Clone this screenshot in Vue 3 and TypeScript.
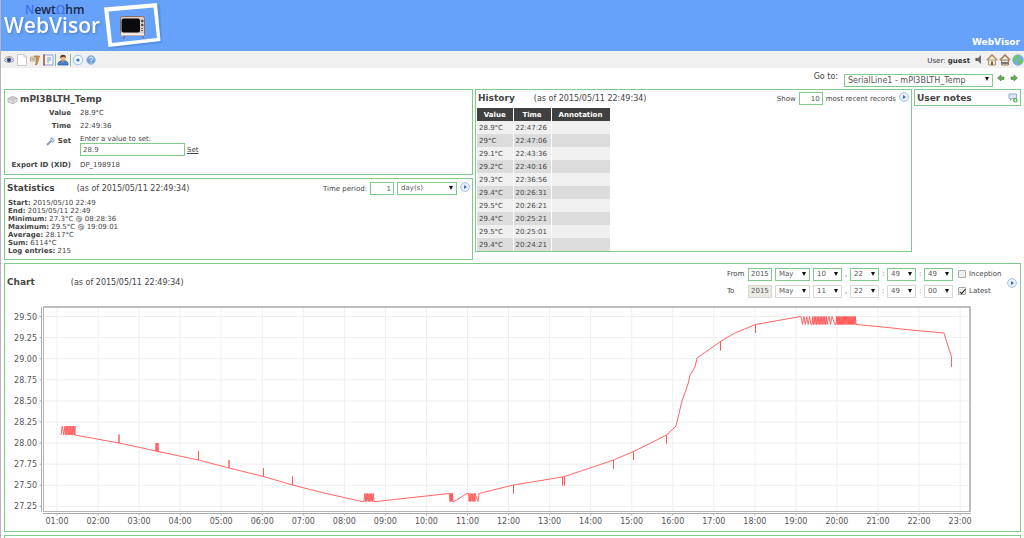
<script setup lang="ts">
import { ref } from 'vue'

const asOf = '(as of 2015/05/11 22:49:34)'
const setValue = ref('28.9')
const periodCount = ref('1')
const period = ref('day(s)')
const recordLimit = ref('10')
const point = ref('SerialLine1 - mPI3BLTH_Temp')
const inception = ref(false)
const latest = ref(true)

const statistics: [string, string][] = [
  ['Start', '2015/05/10 22:49'],
  ['End', '2015/05/11 22:49'],
  ['Minimum', '27.3°C @ 08:28:36'],
  ['Maximum', '29.5°C @ 19:09:01'],
  ['Average', '28.17°C'],
  ['Sum', '6114°C'],
  ['Log entries', '215'],
]

const history: [string, string][] = [
  ['28.9°C', '22:47:26'],
  ['29°C', '22:47:06'],
  ['29.1°C', '22:43:36'],
  ['29.2°C', '22:40:16'],
  ['29.3°C', '22:36:56'],
  ['29.4°C', '20:26:31'],
  ['29.5°C', '20:26:21'],
  ['29.4°C', '20:25:21'],
  ['29.5°C', '20:25:01'],
  ['29.4°C', '20:24:21'],
]

interface RangeRow {
  id: string
  label: string
  year: string
  parts: { name: string; value: string; sep: string }[]
  off: boolean
}

const ranges = ref<RangeRow[]>([
  {
    id: 'from', label: 'From', year: '2015', off: false,
    parts: [
      { name: 'month', value: 'May', sep: '' },
      { name: 'day', value: '10', sep: ',' },
      { name: 'hour', value: '22', sep: ':' },
      { name: 'minute', value: '49', sep: ':' },
      { name: 'second', value: '49', sep: '' },
    ],
  },
  {
    id: 'to', label: 'To', year: '2015', off: true,
    parts: [
      { name: 'month', value: 'May', sep: '' },
      { name: 'day', value: '11', sep: ',' },
      { name: 'hour', value: '22', sep: ':' },
      { name: 'minute', value: '49', sep: ':' },
      { name: 'second', value: '00', sep: '' },
    ],
  },
])

type Pt = [number, number]

const xTicks = Array.from({ length: 23 }, (_, i) => ({
  x: 57 + i * 41.05,
  label: String(i + 1).padStart(2, '0') + ':00',
}))
const yTicks = Array.from({ length: 10 }, (_, i) => ({
  y: 316.5 + i * 21.1,
  label: (29.5 - i * 0.25).toFixed(2),
}))

function burst(x0: number, x1: number, steps: number, a: number, b: number): Pt[] {
  return Array.from({ length: steps + 1 }, (_, i): Pt => [x0 + ((x1 - x0) * i) / steps, i % 2 ? b : a])
}
function spike(x: number, base: number, tip: number): Pt[] {
  return [[x, base], [x, tip], [x, base]]
}

const series: Pt[] = [
  ...burst(61, 65, 3, 435, 426),
  ...burst(65.5, 75, 13, 435, 426),
  [75, 435],
  ...spike(119, 443, 434.5),
  ...spike(156, 451, 443), ...spike(157, 451.5, 443), ...spike(158, 451.5, 443),
  ...spike(198.5, 460, 451),
  ...spike(229, 468, 460),
  ...spike(263.5, 476.5, 468),
  ...spike(292.5, 485, 476.5),
  [324, 493], [362, 501.5],
  ...burst(364, 374, 14, 501.5, 493.5),
  [376, 501.5], [449, 493.5],
  ...burst(449.5, 453, 7, 493.5, 501.5),
  [454, 501.5], [467, 493.5],
  ...burst(468.5, 475, 9, 493.5, 501.5),
  [475, 493.5], [478, 501.5], [479, 493.5],
  ...spike(513.5, 485, 493.5),
  ...spike(562.5, 477, 485.5), ...spike(564.5, 476.5, 485.5),
  [590, 468],
  ...spike(613.5, 460, 468.5),
  ...spike(633.5, 451.5, 460),
  [650, 443.5],
  ...spike(666.5, 435, 443.5),
  [676, 426], [682, 401], [688, 384], [690, 375], [695, 367], [697, 358],
  ...spike(720.5, 341.5, 350.5),
  [735, 333],
  ...spike(755.5, 324.5, 333),
  [778, 320.5], [801, 316.5],
  ...burst(802.5, 811, 6, 324.5, 316.5),
  ...burst(812, 827, 20, 324.5, 316.5),
  ...burst(829, 832, 2, 316.5, 324.5),
  [835, 324.5],
  ...burst(836, 856, 36, 324.5, 316.5),
  [856, 324.5], [878, 326.5], [911, 330], [944, 333], [948, 346], [951.5, 357], [951.5, 367],
]
const seriesPoints = series.map((p) => p.join(',')).join(' ')
</script>

<template>
  <div class="page">
    <header class="banner">
      <a href="#" class="logo" aria-label="NewtOhm WebVisor">
        <svg width="168" height="51" viewBox="0 0 168 51">
          <text x="24" y="14" class="brand"><tspan class="brand-hi">N</tspan>ewt<tspan class="brand-hi">Ω</tspan>hm</text>
          <text x="3" y="33" class="product">WebVisor</text>
          <path d="M107 10l52-5 2 38-53 6z" fill="#4a80cc" opacity=".5" />
          <path d="M103 7.500l53-4.500 3.500 38-52 6z" fill="#fff" />
          <path d="M107.500 11.500l45-4 3.500 30.500-45 5z" fill="#66a2f9" />
          <path d="M124 36l-1.500 3M141 35.500l2 3" stroke="#a04a3c" stroke-width="1" />
          <rect x="119.500" y="16.500" width="24" height="19" rx="2" fill="#d9d0cb" stroke="#8d6d68" />
          <path d="M120 34.500h23" stroke="#f5f1ef" stroke-width="2" />
          <rect x="120.500" y="18.500" width="18.500" height="14" rx="2" fill="#0b0b0d" />
          <circle cx="141.300" cy="21" r="1.200" fill="#333" />
          <circle cx="141.300" cy="25" r="1.200" fill="#444" />
          <path d="M140 28.500h2M140 30.500h2" stroke="#75665f" />
        </svg>
      </a>
      <span class="instance">WebVisor</span>
    </header>

    <nav class="toolbar" aria-label="Main">
      <a href="#" class="tool" aria-label="Watch list">
        <svg width="12" height="12" viewBox="0 0 12 12"><path d="M1 6.500Q6 1.500 11 6.500Q6 10.500 1 6.500z" fill="#e9edf5" stroke="#9c9aa8" /><circle cx="6" cy="6" r="2.300" fill="#495e9d" /><circle cx="6" cy="6" r="1" fill="#1f2848" /><path d="M1.500 4.500Q6 .5 10.500 4.500" fill="none" stroke="#b8a49c" /></svg>
      </a>
      <a href="#" class="tool" aria-label="Graphic views">
        <svg width="12" height="12" viewBox="0 0 12 12"><path d="M1.500.5h6.500l2.500 2.500v8.500h-9z" fill="#fff" stroke="#c9c9c9" /><path d="M8 .5V3h2.500" fill="none" stroke="#c9c9c9" /></svg>
      </a>
      <a href="#" class="tool" aria-label="Events">
        <svg width="12" height="12" viewBox="0 0 12 12"><path d="M1.500 3h6v4h-6z" fill="#f0e6d4" stroke="#b39a70" stroke-width=".8" /><path d="M2.500 5h4" stroke="#7d6b50" stroke-width=".8" /><path d="M5 2h5.500L8 10.500l-1.500.5L8 4z" fill="#d99a52" stroke="#a8743c" stroke-width=".7" /></svg>
      </a>
      <a href="#" class="tool" aria-label="Reports">
        <svg width="12" height="12" viewBox="0 0 12 12"><rect x="2" y="1" width="9" height="10" fill="#f5f8fd" stroke="#8fa4cc" /><path d="M2 .5v11" stroke="#b5533b" stroke-width="1.500" /><path d="M5 4h4M5 6h4M5 8h2" stroke="#7b97cf" /></svg>
      </a>
      <i class="divider"></i>
      <a href="#" class="tool" aria-label="Users">
        <svg width="12" height="12" viewBox="0 0 12 12"><path d="M1 11V9q1-2.500 5-2.500T11 9v2z" fill="#4c82d4" stroke="#2e5590" stroke-width=".7" /><circle cx="6" cy="4" r="2.600" fill="#edb184" /><path d="M3.200 4Q3 .8 6 .8T8.800 4Q7.500 2.500 6 2.800T3.200 4z" fill="#5a3520" /><path d="M4.500 7h3L6 9z" fill="#dc7c36" /></svg>
      </a>
      <i class="divider"></i>
      <a href="#" class="tool" aria-label="Status">
        <svg width="12" height="12" viewBox="0 0 12 12"><circle cx="6" cy="6" r="4.800" fill="#eef5fe" stroke="#9dbdea" /><circle cx="6" cy="6" r="1.600" fill="#3a73c4" /></svg>
      </a>
      <a href="#" class="tool" aria-label="Help">
        <svg width="12" height="12" viewBox="0 0 12 12"><circle cx="6" cy="6" r="4.400" fill="#6f9fdb" stroke="#a6c3e8" /><path d="M4.300 4.600q.2-1.400 1.800-1.400t1.700 1.300Q7.800 5.700 6 6.500v.8M6 8.300v1" fill="none" stroke="#fff" /></svg>
      </a>
      <span class="who">User: <b>guest</b></span>
      <a href="#" class="tool" aria-label="Mute">
        <svg width="12" height="12" viewBox="0 0 12 12"><path d="M3 4h2l3-3v9L5 7H3z" fill="#6f6f6f" /><path d="M3 4v3" stroke="#444" /></svg>
      </a>
      <a href="#" class="tool" aria-label="Go home">
        <svg width="12" height="12" viewBox="0 0 12 12"><path d="M2.500 6h7v5h-7z" fill="#f2ead8" stroke="#96805c" stroke-width=".8" /><path d="M.8 6.300L6 1l5.200 5.300" fill="none" stroke="#c08a58" stroke-width="1.600" /><rect x="5" y="7.500" width="2" height="3.500" fill="#8a5f3a" /></svg>
      </a>
      <a href="#" class="tool" aria-label="Set home">
        <svg width="12" height="12" viewBox="0 0 12 12"><path d="M2.500 6h7v5h-7z" fill="#eadfc8" stroke="#75664e" stroke-width=".8" /><path d="M.8 6.300L6 1l5.200 5.300" fill="none" stroke="#b07c50" stroke-width="1.600" /><path d="M3 9h6" stroke="#5d5d5d" stroke-width="1.600" /></svg>
      </a>
      <a href="#" class="tool" aria-label="Language">
        <svg width="12" height="12" viewBox="0 0 12 12"><circle cx="6" cy="6" r="5.300" fill="#72ade4" stroke="#7fa8c8" stroke-width=".7" /><path d="M1.500 4q1.500-3.500 5-3 1.500 2-.5 3T4 7.500Q2 7.500 1 6zM6 6.500q3-2.500 5 0 0 2-2 3.500Q6 11 6 9z" fill="#6cc760" /></svg>
      </a>
    </nav>

    <div class="goto">
      <label for="goto">Go to:</label>
      <span class="pick pick-point">
        <select id="goto" v-model="point"><option>SerialLine1 - mPI3BLTH_Temp</option></select>
      </span>
      <button type="button" class="icon" aria-label="Previous point">
        <svg width="10" height="10" viewBox="0 0 10 10"><path d="M1.500 5L5 2v2h3v2.500H5V8z" fill="#62ae50" stroke="#3c8434" stroke-width=".6" /></svg>
      </button>
      <button type="button" class="icon" aria-label="Next point">
        <svg width="10" height="10" viewBox="0 0 10 10"><path d="M8.500 5L5 2v2H2v2.500h3V8z" fill="#62ae50" stroke="#3c8434" stroke-width=".6" /></svg>
      </button>
    </div>

    <main>
      <div class="columns">
        <div class="stack">
          <section class="panel device">
            <h1>
              <svg width="11" height="10" viewBox="0 0 12 10"><path d="M1 3.500L6 1l5 2v3.500L6.500 9 1 7z" fill="#e3e3e3" stroke="#a2a2a2" stroke-width=".8" /><path d="M1 3.500l5.500 2 4.500-2.500M6.500 5.500V9M3 3l4 1.500M5 2l4 1.500" fill="none" stroke="#aaa" stroke-width=".7" /></svg>
              mPI3BLTH_Temp
            </h1>
            <div class="facts">
              <b>Value</b><span>28.9°C</span>
              <b>Time</b><span>22:49:36</span>
              <b class="set-label">
                <svg width="9" height="9" viewBox="0 0 9 9"><path d="M1.500 7.500L5 4" stroke="#7f9bc8" stroke-width="1.800" stroke-linecap="round" /><path d="M7.500 1.300L6 2.800M4.500 2.500q.5-1.700 2-1.700M8.300 2.500q.2 2-2 2.500L4.500 4" fill="none" stroke="#8ba4cc" stroke-width="1.200" /></svg>
                Set
              </b>
              <div class="setter">
                <label for="set-value">Enter a value to set:</label>
                <div class="set-row">
                  <input id="set-value" v-model="setValue" type="text" />
                  <a href="#">Set</a>
                </div>
              </div>
              <b>Export ID (XID)</b><span>DP_198918</span>
            </div>
          </section>

          <section class="panel stats">
            <div class="bar">
              <h2>Statistics</h2>
              <span class="as-of">{{ asOf }}</span>
              <div class="tools">
                <label for="period-count">Time period:</label>
                <input id="period-count" v-model="periodCount" type="text" class="num" />
                <span class="pick pick-period">
                  <select v-model="period" aria-label="Period unit"><option>day(s)</option></select>
                </span>
                <button type="button" class="icon" aria-label="Refresh statistics">
                  <svg width="10" height="10" viewBox="0 0 10 10"><circle cx="5" cy="5" r="4.400" fill="#e8f1fd" stroke="#a5c1ea" /><path d="M4 3l3 2-3 2z" fill="#3570bd" /></svg>
                </button>
              </div>
            </div>
            <ul>
              <li v-for="[name, value] in statistics" :key="name"><b>{{ name }}:</b> {{ value }}</li>
            </ul>
          </section>
        </div>

        <section class="panel history">
          <div class="bar">
            <h2>History</h2>
            <span class="as-of">{{ asOf }}</span>
            <div class="tools">
              <label for="limit">Show</label>
              <input id="limit" v-model="recordLimit" type="text" class="num" />
              <span>most recent records</span>
              <button type="button" class="icon" aria-label="Refresh history">
                <svg width="10" height="10" viewBox="0 0 10 10"><circle cx="5" cy="5" r="4.400" fill="#e8f1fd" stroke="#a5c1ea" /><path d="M4 3l3 2-3 2z" fill="#3570bd" /></svg>
              </button>
            </div>
          </div>
          <table>
            <thead>
              <tr><th class="c-value">Value</th><th class="c-time">Time</th><th class="c-note">Annotation</th></tr>
            </thead>
            <tbody>
              <tr v-for="[value, time] in history" :key="time"><td>{{ value }}</td><td>{{ time }}</td><td></td></tr>
            </tbody>
          </table>
        </section>

        <section class="panel notes">
          <h2>User notes</h2>
          <button type="button" class="icon" aria-label="Add note">
            <svg width="10" height="10" viewBox="0 0 10 10"><path d="M1 1h7.500v4.500H4L2.500 7.500v-2H1z" fill="#dbe7f8" stroke="#86a3d0" stroke-width=".9" /><circle cx="7.300" cy="7.300" r="2.300" fill="#4fae49" /><path d="M7.300 6v2.600M6 7.300h2.600" stroke="#fff" stroke-width=".8" /></svg>
          </button>
        </section>
      </div>

      <section class="panel chart">
        <div class="bar chart-bar">
          <h2>Chart</h2>
          <span class="as-of">{{ asOf }}</span>
          <div class="tools">
            <div class="ranges">
              <div v-for="row in ranges" :key="row.id" class="range" :class="{ off: row.off }">
                <label :for="row.id + '-year'" class="range-label">{{ row.label }}</label>
                <input :id="row.id + '-year'" v-model="row.year" type="text" class="year" :disabled="row.off" />
                <template v-for="part in row.parts" :key="part.name">
                  <span class="pick" :class="part.name === 'month' ? 'pick-month' : 'pick-part'">
                    <select v-model="part.value" :aria-label="row.label + ' ' + part.name" :disabled="row.off">
                      <option>{{ part.value }}</option>
                    </select>
                  </span>
                  <span v-if="part.sep" class="sep">{{ part.sep }}</span>
                </template>
              </div>
            </div>
            <div class="checks">
              <label><input v-model="inception" type="checkbox" />Inception</label>
              <label><input v-model="latest" type="checkbox" />Latest</label>
            </div>
            <button type="button" class="icon" aria-label="Refresh chart">
              <svg width="10" height="10" viewBox="0 0 10 10"><circle cx="5" cy="5" r="4.400" fill="#e8f1fd" stroke="#a5c1ea" /><path d="M4 3l3 2-3 2z" fill="#3570bd" /></svg>
            </button>
          </div>
        </div>
        <svg class="plot" viewBox="5 301 1015 230" role="img" aria-label="mPI3BLTH_Temp over time">
          <g stroke="#efefef">
            <line v-for="t in xTicks" :key="t.label" :x1="t.x" :x2="t.x" y1="308" y2="511" />
            <line v-for="t in yTicks" :key="t.label" :y1="t.y" :y2="t.y" x1="44" x2="969" />
          </g>
          <rect x="43.500" y="307" width="926.500" height="204.500" fill="none" stroke="#b4b4b4" />
          <path d="M43 307h927.500M970 307v205" stroke="#b4b4b4" stroke-width="1.500" fill="none" />
          <path d="M41.500 307v205M43 513.500h927.500" stroke="#aaa" fill="none" />
          <g stroke="#aaa">
            <line v-for="t in yTicks" :key="t.label" :y1="t.y" :y2="t.y" x1="39.500" x2="41.500" />
            <line v-for="t in xTicks" :key="t.label" :x1="t.x" :x2="t.x" y1="513.500" y2="515.500" />
          </g>
          <polyline :points="seriesPoints" fill="none" stroke="#ff5555" stroke-width=".9" />
          <text v-for="t in yTicks" :key="t.label" x="37" :y="t.y + 3" text-anchor="end">{{ t.label }}</text>
          <text v-for="t in xTicks" :key="t.label" :x="t.x" y="524" text-anchor="middle">{{ t.label }}</text>
        </svg>
      </section>
      <section class="panel next"></section>
    </main>
  </div>
</template>

<style>
html,
body {
  margin: 0;
  background: #fff;
}
body {
  overflow: hidden;
}
</style>

<style scoped>
.page {
  border-left: 1px solid #b5b5c0;
  font-family: 'DejaVu Sans', Verdana, sans-serif;
  font-size: 7px;
  line-height: 8px;
  color: #444;
  height: 100vh;
  overflow: hidden;
}
*,
*::before,
*::after {
  box-sizing: border-box;
}
.banner {
  display: flex;
  justify-content: space-between;
  align-items: flex-end;
  height: 51px;
  background: #66a2f9;
}
.logo {
  display: block;
  height: 51px;
}
.brand {
  font: 600 12px 'Open Sans', sans-serif;
  fill: #1c2648;
}
.brand-hi {
  fill: #3f6df0;
}
.product {
  font: 600 21px 'Open Sans', sans-serif;
  fill: #fff;
  filter: drop-shadow(1px 1px 1px #4a7fcc);
}
.instance {
  padding: 0 4px 3px 0;
  font-size: 9px;
  line-height: 11px;
  font-weight: 700;
  color: #fff;
}
.toolbar {
  display: flex;
  align-items: center;
  gap: 1px;
  height: 17px;
  padding: 0 0 0 2px;
  background: #f0f0f0;
}
.tool {
  display: block;
  width: 12px;
  height: 12px;
}
.tool svg,
.icon svg,
h1 svg,
.plot {
  display: block;
}
.divider {
  width: 1px;
  height: 12px;
  background: #7cc488;
}
.who {
  margin-left: auto;
  margin-right: 2px;
  padding-top: 2px;
  color: #333;
}
.goto {
  display: flex;
  justify-content: flex-end;
  align-items: flex-start;
  gap: 3px;
  height: 21px;
  padding: 5px 5px 0 0;
  font-size: 8px;
}
.goto label {
  margin-right: 3px;
}
main {
  display: flex;
  flex-direction: column;
  gap: 3px;
  padding: 0 3px 0 3px;
}
.columns {
  display: grid;
  grid-template-columns: 469fr 437fr 107fr;
  gap: 2px;
  align-items: start;
}
.stack {
  display: flex;
  flex-direction: column;
  gap: 3px;
}
.panel {
  border: 1px solid #7fcb8b;
  background: #fff;
}
h1,
h2 {
  margin: 0;
  font-size: 9px;
  line-height: 11px;
  font-weight: 700;
  color: #444;
}
h1 {
  display: flex;
  align-items: center;
  gap: 2px;
}
.device {
  padding: 4px 2px 5px;
}
.facts {
  display: grid;
  grid-template-columns: 64px 1fr;
  column-gap: 9px;
  row-gap: 5px;
  padding-top: 4px;
}
.facts > b {
  text-align: right;
  white-space: nowrap;
}
.facts .set-label {
  display: flex;
  justify-content: flex-end;
  align-items: flex-start;
  gap: 3px;
  padding-top: 2px;
}
.set-row {
  display: flex;
  align-items: center;
  gap: 2px;
}
.setter label {
  display: block;
}
a {
  color: #444;
}
input[type='text'],
select {
  height: 13px;
  margin: 0;
  padding: 0 2px;
  border: 1px solid #7fcb8b;
  border-radius: 0;
  background: #fff;
  font: inherit;
  line-height: 11px;
  color: #555;
}
#set-value {
  width: 105px;
}
input.num {
  width: 24px;
  text-align: right;
}
.pick {
  position: relative;
  display: inline-block;
}
.pick select {
  display: block;
  width: 100%;
  padding: 0 0 0 3px;
  appearance: none;
}
.pick::after {
  content: '';
  position: absolute;
  top: 4px;
  right: 4px;
  border: 2px solid transparent;
  border-top: 4px solid #111;
  border-bottom: 0;
  pointer-events: none;
}
.pick-point {
  width: 149px;
  padding-top: 1px;
}
.pick-period {
  width: 60px;
}
.pick-month {
  width: 35px;
}
.pick-part {
  width: 29px;
}
.icon {
  padding: 0;
  border: 0;
  background: none;
}
.bar {
  display: flex;
  align-items: center;
}
.as-of {
  margin-left: 22px;
  font-size: 8px;
}
.history .as-of {
  margin-left: 19px;
}
.chart .as-of {
  margin-left: 36px;
}
.tools {
  display: flex;
  align-items: center;
  gap: 3px;
  margin-left: auto;
}
.stats .icon,
.history .icon {
  align-self: flex-start;
}
.stats {
  padding: 3px 2px 4px;
}
.stats ul {
  margin: 0;
  padding: 4px 0 0 1px;
  list-style: none;
}
.history {
  padding: 2px 2px 0 1px;
}
.history h2 {
  padding-left: 1px;
}
table {
  margin-top: 3px;
  border-collapse: collapse;
}
th,
td {
  height: 13px;
  padding: 0 2px;
  border-right: 1px solid #fff;
  text-align: left;
}
th {
  background: #404040;
  color: #fff;
  text-align: center;
}
td {
  background: #f0f0f0;
}
tr:nth-child(even) td {
  background: #dcdcdc;
}
.c-value {
  width: 36px;
}
.c-time {
  width: 38px;
}
.c-note {
  width: 59px;
}
.notes {
  display: flex;
  justify-content: space-between;
  align-items: center;
  height: 17px;
  padding: 1px 2px 0;
}
.chart-bar {
  height: 37px;
  padding: 0 3px 0 2px;
}
.ranges,
.checks {
  display: flex;
  flex-direction: column;
  gap: 4px;
}
.range {
  display: flex;
  align-items: center;
  gap: 3px;
}
.range-label {
  width: 18px;
}
.year {
  width: 24px;
}
.sep {
  width: 2px;
}
.off .year,
.off select {
  border-color: #d8d8d8;
  opacity: 1;
}
.off input.year {
  background: #ebebe4;
}
.checks {
  padding: 0 3px 0 2px;
}
.checks label {
  display: flex;
  align-items: center;
  gap: 3px;
  width: 43px;
  height: 13px;
  white-space: nowrap;
}
.checks input {
  display: grid;
  place-items: center;
  flex: none;
  width: 8px;
  height: 8px;
  margin: 0;
  border: 1px solid #aaa;
  border-radius: 1px;
  background: #f0f0f0;
  appearance: none;
}
.checks input:checked::after {
  content: '';
  width: 3px;
  height: 6px;
  border: solid #222;
  border-width: 0 1px 1px 0;
  transform: rotate(40deg);
}
.plot {
  width: 100%;
  font-size: 8px;
}
.plot text {
  fill: #555;
}
.next {
  height: 12px;
}
</style>
